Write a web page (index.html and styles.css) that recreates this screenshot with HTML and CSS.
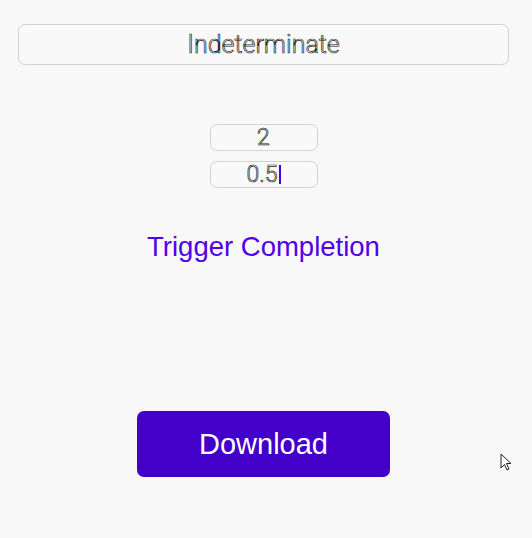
FILE: index.html
```html
<!DOCTYPE html>
<html>
<head>
<meta charset="utf-8">
<link rel="stylesheet" href="styles.css">
</head>
<body>
<main class="page">
  <div class="field field-wide"><span class="outline">Indeterminate</span></div>
  <div class="numbers">
    <div class="field field-num"><span class="outline">2</span></div>
    <div class="field field-num"><span class="outline">0.5</span><span class="caret"></span></div>
  </div>
  <div class="link">Trigger Completion</div>
  <button class="download">Download</button>
</main>
<svg class="cursor" width="14" height="20" viewBox="0 0 14 20">
  <path d="M1 1 L1 15 L4.5 11.5 L7 17 L9 16 L6.5 10.5 L11 10.5 Z" fill="#fff" stroke="#222" stroke-width="1"/>
</svg>
</body>
</html>
```
FILE: styles.css
```css
html, body {
  margin: 0;
  padding: 0;
  background: #f8f8f8;
  width: 532px;
  height: 538px;
  overflow: hidden;
}
body { position: relative; }
.page {
  display: flex;
  flex-direction: column;
  align-items: center;
  padding-top: 24px;
  font-family: "Liberation Sans", Arial, sans-serif;
}
.field {
  box-sizing: border-box;
  border: 1px solid #d2d2d2;
  border-radius: 7px;
  background: #f9f9f9;
  display: flex;
  align-items: center;
  justify-content: center;
}
.field-wide {
  width: 491px;
  height: 41px;
  margin-left: -5px;
}
.outline {
  font-family: Roboto, "Liberation Sans", sans-serif;
  font-weight: 300;
  color: #fff;
  -webkit-text-stroke: 0.7px #222;
}
.field-wide .outline { font-size: 25px; }
.numbers {
  margin-top: 59px;
  display: flex;
  flex-direction: column;
  gap: 10px;
  margin-left: -5px;
}
.field-num {
  width: 108px;
  height: 27px;
}
.field-num .outline { font-size: 23px; }
.caret {
  display: inline-block;
  width: 2px;
  height: 19px;
  background: #4a00e0;
  margin-left: 1px;
}
.link {
  margin-top: 43px;
  font-size: 27.5px;
  color: #5100ea;
  margin-left: -5px;
}
.download {
  margin-top: 148px;
  margin-left: -5px;
  width: 253px;
  height: 66px;
  border: none;
  border-radius: 7px;
  background: #4200c8;
  color: #fff;
  font-family: "Liberation Sans", Arial, sans-serif;
  font-size: 29px;
  padding: 0;
}
.cursor {
  position: absolute;
  left: 500px;
  top: 453px;
}
```
